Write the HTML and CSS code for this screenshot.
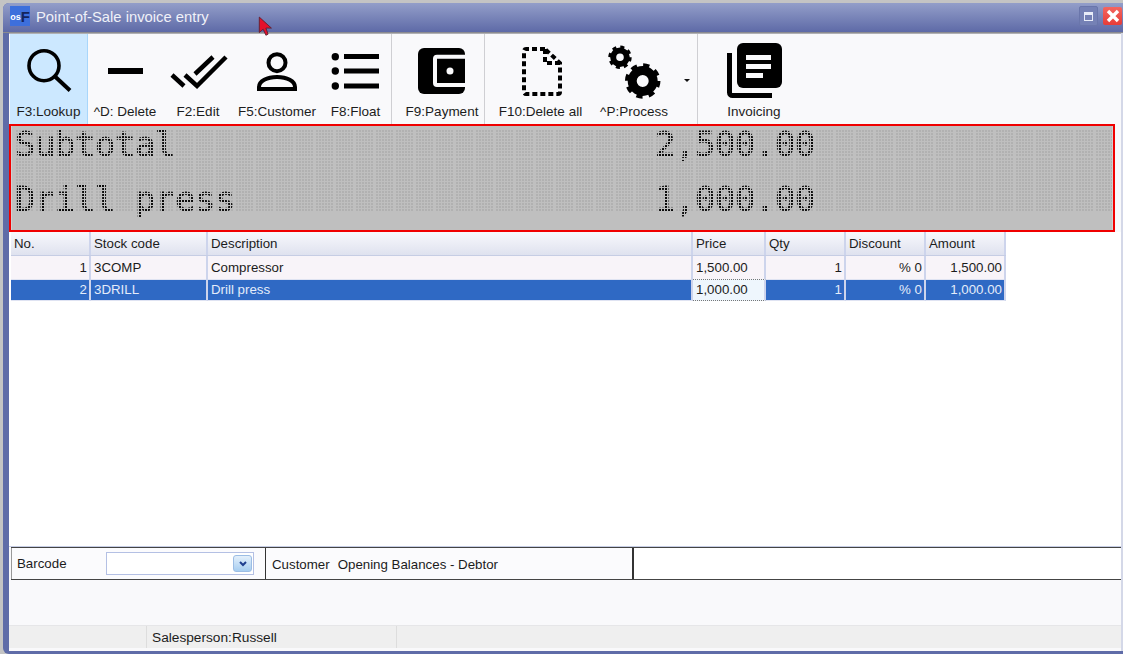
FILE: index.html
```html
<!DOCTYPE html>
<html>
	<head>
		<meta charset="utf-8">
		<link rel="stylesheet" href="styles.css">
		<title>Point-of-Sale invoice entry</title>
	</head>
	<body>
		<div class="window">
			<header class="titlebar">
				<div class="logo"><span class="logo_os">os</span><span class="logo_f">F</span></div>
				<span class="title">Point-of-Sale invoice entry</span>
				<div class="winbtn winbtn_max"><i></i></div>
				<div class="winbtn winbtn_close">
					<svg width="14" height="14" viewBox="0 0 14 14"><path d="M2 2L12 12M12 2L2 12" stroke="#fff" stroke-width="3.4" fill="none"/></svg>
				</div>
			</header>

			<main class="content">
				<nav class="toolbar">
					<div class="tool tool_active w78">
						<svg class="icon" viewBox="0 0 60 60"><circle cx="25" cy="24.7" r="15" fill="none" stroke="#000" stroke-width="3.6"/><path d="M36 35.5L51 49.5" stroke="#000" stroke-width="4"/></svg>
						<label>F3:Lookup</label>
					</div>
					<div class="tool w74">
						<svg class="icon" viewBox="0 0 60 60"><rect x="13" y="27" width="35" height="6"/></svg>
						<label>^D: Delete</label>
					</div>
					<div class="tool w72">
						<svg class="icon" viewBox="0 0 60 60"><path d="M4 34L16 45M17 34L29 45L58 16M27 33L45 16" fill="none" stroke="#000" stroke-width="4.5"/></svg>
						<label>F2:Edit</label>
					</div>
					<div class="tool w86">
						<svg class="icon" viewBox="0 0 60 60"><circle cx="30" cy="21.7" r="8.5" fill="none" stroke="#000" stroke-width="4"/><path d="M12 48v-2c0-6 8-10 18-10s18 4 18 10v2z" fill="none" stroke="#000" stroke-width="4"/></svg>
						<label>F5:Customer</label>
					</div>
					<div class="tool w71">
						<svg class="icon" viewBox="0 0 60 60"><circle cx="9.3" cy="15.7" r="3.7"/><circle cx="9.3" cy="30" r="3.7"/><circle cx="9.3" cy="45" r="3.7"/><rect x="18" y="13" width="35" height="5"/><rect x="18" y="27.5" width="35" height="5"/><rect x="18" y="42.5" width="35" height="5"/></svg>
						<label>F8:Float</label>
					</div>
					<div class="sep"></div>
					<div class="tool tool_pay w92">
						<svg class="icon" viewBox="0 0 60 60"><rect x="6" y="7" width="47" height="46" rx="6"/><path d="M55 15.7H25a2 2 0 0 0-2 2V42a2 2 0 0 0 2 2H55" fill="none" stroke="#f9f9fb" stroke-width="4"/><circle cx="38" cy="30" r="3.5" fill="#f9f9fb"/></svg>
						<label>F9:Payment</label>
					</div>
					<div class="sep"></div>
					<div class="tool w111">
						<svg class="icon" viewBox="0 0 60 60"><path d="M34 8H15a2 2 0 0 0-2 2V51a2 2 0 0 0 2 2H47a2 2 0 0 0 2-2V22L34 8ZM34 8V22H49" fill="none" stroke="#000" stroke-width="4" stroke-dasharray="5 3"/></svg>
						<label>F10:Delete all</label>
					</div>
					<div class="tool w76">
						<svg class="icon" viewBox="0 0 60 60">
							<circle cx="16" cy="16.3" r="6.8" fill="none" stroke="#000" stroke-width="6"/>
							<circle cx="16" cy="16.3" r="10" fill="none" stroke="#000" stroke-width="3.4" stroke-dasharray="3.93 3.92"/>
							<circle cx="38.7" cy="40" r="10.5" fill="none" stroke="#000" stroke-width="9"/>
							<circle cx="38.7" cy="40" r="15.5" fill="none" stroke="#000" stroke-width="4.5" stroke-dasharray="6.09 6.08"/>
						</svg>
						<label>^P:Process</label>
					</div>
					<div class="tool_arrow"></div>
					<div class="sep"></div>
					<div class="tool w112">
						<svg class="icon" viewBox="0 0 60 60"><rect x="13" y="2" width="45" height="45" rx="6"/><rect x="22" y="14" width="25" height="5" fill="#f9f9fb"/><rect x="22" y="23" width="25" height="5" fill="#f9f9fb"/><rect x="22" y="32" width="17" height="5" fill="#f9f9fb"/><path d="M5.5 12V51.5a3 3 0 0 0 3 3H48" fill="none" stroke="#000" stroke-width="5"/></svg>
						<label>Invoicing</label>
					</div>
				</nav>

				<section class="lcd_frame">
					<div class="lcd">
						<div class="lcd_row"><div class="lcd_text">Subtotal                        2,500.00</div></div>
						<div class="lcd_row"></div>
						<div class="lcd_row"><div class="lcd_text">Drill press                     1,000.00</div></div>
					</div>
				</section>

				<section class="grid_area">
					<div class="grid grid_head">
						<div>No.</div><div>Stock code</div><div>Description</div><div>Price</div><div>Qty</div><div>Discount</div><div>Amount</div>
					</div>
					<div class="grid grid_row">
						<div class="num">1</div><div>3COMP</div><div>Compressor</div><div>1,500.00</div><div class="num">1</div><div class="num">% 0</div><div class="num">1,500.00</div>
					</div>
					<div class="grid grid_row grid_row_sel">
						<div class="num">2</div><div>3DRILL</div><div>Drill press</div><div class="cell_edit">1,000.00</div><div class="num">1</div><div class="num">% 0</div><div class="num">1,000.00</div>
					</div>
				</section>

				<section class="entry">
					<div class="entry_barcode">
						<label>Barcode</label>
						<div class="combo"><div class="combo_btn">
							<svg width="10" height="8" viewBox="0 0 10 8"><path d="M2 2L5 5L8 2" fill="none" stroke="#1f3f8f" stroke-width="2"/></svg>
						</div></div>
					</div>
					<div class="entry_customer"><span>Customer</span><span>Opening Balances - Debtor</span></div>
					<div class="entry_rest"></div>
				</section>

				<div class="filler"></div>

				<footer class="status">
					<div class="status_a"></div>
					<div class="status_b">Salesperson:Russell</div>
					<div class="status_c"></div>
				</footer>
			</main>
		</div>
		<svg class="cursor" width="18" height="22" viewBox="0 0 16 20"><path d="M1 1V15L4.5 12L7 17.5L9 16.5L7 11H12Z" fill="#e4102c" stroke="#5a2030" stroke-width="0.8"/></svg>
	</body>
</html>
```

FILE: styles.css
```css
html, body{ margin: 0; height: 100%; overflow: hidden; }
body{ background: #c4c4c4; padding: 3px 0 0 3px; box-sizing: border-box; font-family: "Liberation Sans", sans-serif; font-size: 13.3px; color: #1c1c1c; position: relative; }

.window{ height: 651px; display: flex; flex-flow: column nowrap; background: #5f6ca8; border-radius: 6px 0 0 6px; padding: 0 0 3px 6px; box-sizing: border-box; }

/* title bar */
.titlebar{ height: 29px; margin-left: -6px; padding-left: 7px; display: flex; align-items: center; background: linear-gradient(#939ec9, #5e6aa7); border-radius: 6px 0 0 0; border-bottom: 1px solid #8b8b90; flex: none; }
.logo{ width: 20px; height: 20px; margin-top: -3px; background: #3d6fdc; display: flex; align-items: center; justify-content: center; font-weight: bold; font-size: 12px; }
.logo_os{ color: #fff; font-size: 9px; margin-top: 2px; }
.logo_f{ color: #14245c; font-size: 15px; }
.title{ color: #f0f1f8; font-size: 14.8px; margin-left: 6px; margin-top: -2px; flex-grow: 1; }
.winbtn{ width: 19px; height: 20px; border-radius: 2px; display: flex; align-items: center; justify-content: center; margin-top: -3px; }
.winbtn_max{ background: #7581b5; border: 1px solid #6a76ab; box-sizing: border-box; margin-right: 5px; }
.winbtn_max i{ width: 7px; height: 5px; border: 1.5px solid #e8ecf8; border-top-width: 3px; }
.winbtn_close{ background: linear-gradient(#f4655f, #e63c38); margin-right: 1px; height: 18px; }

.content{ flex-grow: 1; min-height: 0; display: flex; flex-flow: column nowrap; background: #f9f9fb; border-right: 2px solid #d4d8e8; padding-bottom: 3px; }

/* toolbar */
.toolbar{ height: 91px; flex: none; display: flex; padding-left: 1px; border-top: 1px solid #b0b0b4; box-sizing: border-box; }
.tool{ display: flex; flex-flow: column nowrap; align-items: center; padding-top: 7px; box-sizing: border-box; }
.tool_active{ background: #cce8ff; border-right: 1px solid #a8d6fb; }
.tool_pay{ padding-left: 8px; }
.tool label{ line-height: 16px; margin-top: 3px; font-size: 13.5px; white-space: nowrap; }
.icon{ width: 60px; height: 60px; flex: none; overflow: visible; }
.sep{ width: 1px; background: #cfcfd3; flex: none; }
.w71{ width: 71px; } .w72{ width: 72px; } .w74{ width: 74px; } .w76{ width: 76px; } .w78{ width: 78px; }
.w86{ width: 86px; } .w92{ width: 92px; } .w111{ width: 111px; } .w112{ width: 112px; }
.tool_arrow{ width: 25px; flex: none; position: relative; }
.tool_arrow::after{ content: ""; position: absolute; left: 12px; top: 45px; border: 3px solid transparent; border-top: 3px solid #111; }

/* lcd display */
.lcd_frame{ height: 108px; width: 1106px; box-sizing: border-box; border: 2px solid #f00000; flex: none; }
.lcd{ height: 100%; box-sizing: border-box; padding: 4px 0 0 4px; background: #bfbfbf; overflow: hidden; border: 1px solid #d0d0d0; border-width: 0 1px 0 1px; }
.lcd_row{ height: 27px; width: 1098px; background: url("data:image/svg+xml,%3Csvg xmlns='http://www.w3.org/2000/svg' width='20' height='27'%3E%3Cpattern id='p' width='3' height='3' patternUnits='userSpaceOnUse'%3E%3Crect width='2' height='2' fill='%23b1b1b1'/%3E%3C/pattern%3E%3Crect width='18' height='27' fill='url(%23p)'/%3E%3C/svg%3E"); }
.lcd_row:first-child{ margin-bottom: 1px; }
.lcd_text{ box-sizing: border-box; height: 33px; padding-top: 1px; white-space: pre; text-indent: -1px; font-family: "DejaVu Sans Mono", monospace; font-size: 34px; line-height: 27px; letter-spacing: -0.47px; color: transparent; -webkit-text-stroke: 0.8px transparent; background: url("data:image/svg+xml,%3Csvg xmlns='http://www.w3.org/2000/svg' width='20' height='27'%3E%3Cpattern id='p' width='3' height='3' patternUnits='userSpaceOnUse'%3E%3Crect width='2' height='2' fill='%230c0c0c'/%3E%3C/pattern%3E%3Crect width='18' height='27' fill='url(%23p)'/%3E%3C/svg%3E"); -webkit-background-clip: text; background-clip: text; }

/* invoice lines */
.grid_area{ height: 315px; flex: none; background: #fff; border-bottom: 1px solid #c6cde4; padding-left: 2px; box-sizing: border-box; }
.grid{ display: grid; grid-template-columns: 80px 117px 485px 73px 80px 80px 80px; width: 995px; }
.grid > div{ padding: 0 2px 0 3px; box-sizing: border-box; border-right: 2px solid #cdd4ec; white-space: nowrap; }
.grid_head{ height: 24px; line-height: 23px; background: linear-gradient(#f8f8fc, #dfe2ef); border-bottom: 1px solid #c6cde4; box-sizing: border-box; }
.grid_row{ height: 23px; line-height: 23px; background: #f8f4f9; }
.grid_row > div{ border-bottom: 1px solid #dfe3f2; }
.grid_row_sel{ height: 21px; line-height: 21px; background: #2f69c4; color: #e4ecfa; }
.num{ text-align: right; }
.cell_edit{ background: #eef6fd; color: #1c1c1c; border-top: 1px dotted #777; border-bottom: 1px dotted #777 !important; line-height: 19px; }

/* barcode row */
.entry{ height: 33px; flex: none; display: flex; margin-left: 2px; background: #fff; border: 1px solid #444; border-width: 1px 0; box-sizing: border-box; }
.entry_barcode{ width: 255px; flex: none; display: flex; align-items: center; box-sizing: border-box; background: #fbfbfd; border-left: 1px solid #999; border-right: 1px solid #333; }
.entry_barcode label{ width: 94px; padding-left: 5px; box-sizing: border-box; }
.combo{ width: 148px; height: 23px; box-sizing: border-box; background: #fff; border: 1px solid #b4c0e4; display: flex; align-items: center; justify-content: flex-end; padding-right: 1px; }
.combo_btn{ width: 19px; height: 17px; border-radius: 3px; background: linear-gradient(#e4f0fb, #a6cdf0); border: 1px solid #9cbde4; box-sizing: border-box; display: flex; align-items: center; justify-content: center; }
.entry_customer{ width: 368px; flex: none; display: flex; gap: 8px; align-items: center; padding: 1px 0 0 6px; box-sizing: border-box; background: #fbfbfd; border-right: 2px solid #333; }
.entry_rest{ flex-grow: 1; }

.filler{ flex-grow: 1; }

/* status bar */
.status{ height: 23px; flex: none; display: flex; background: #efefef; border-top: 1px solid #e6e6e8; box-sizing: border-box; line-height: 23px; }
.status_a{ width: 137px; border-right: 1px solid #ddd; flex: none; }
.status_b{ width: 250px; padding-left: 5px; box-sizing: border-box; border-right: 1px solid #ddd; flex: none; font-size: 13.7px; }

.cursor{ position: absolute; left: 258px; top: 16px; }
```
